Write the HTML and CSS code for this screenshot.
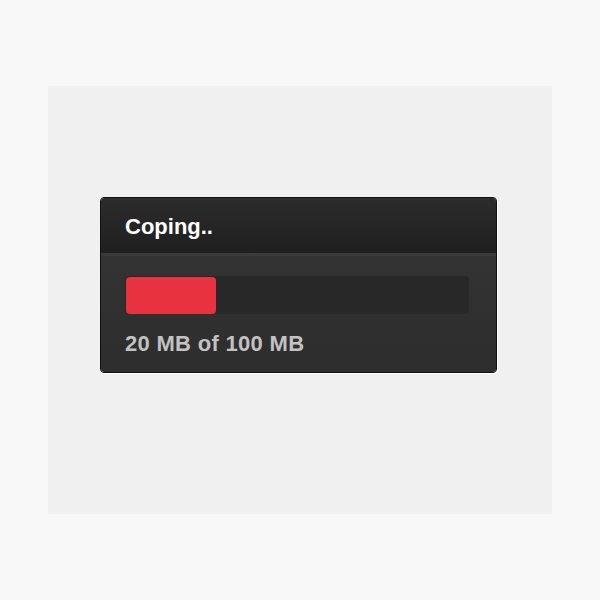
FILE: index.html
```html
<!DOCTYPE html>
<html lang="en">
<head>
    <meta charset="UTF-8">
    <title>Coping</title>
    <link rel="stylesheet" href="styles.css">
</head>
<body>
    <div class="panel">
        <div class="dialog">
            <div class="dialog-header">Coping..</div>
            <div class="dialog-body">
                <div class="progress">
                    <div class="progress-fill" style="width: 90px;"></div>
                </div>
                <div class="progress-text">20 MB of 100 MB</div>
            </div>
        </div>
    </div>
</body>
</html>
```

FILE: styles.css
```css
body {
    margin: 0;
    background: #f8f8f8;
    font-family: "Liberation Sans", Arial, sans-serif;
}

.panel {
    margin: 86px 48px;
    height: 428px;
    background: #f0f0f0;
    padding: 111px 0 0 52px;
    box-sizing: border-box;
}

.dialog {
    width: 397px;
    box-sizing: border-box;
    border: 1px solid #111111;
    border-radius: 4px;
    box-shadow: 1px 1px 0 #ffffff;
    overflow: hidden;
}

.dialog-header {
    padding: 17px 24px 14px;
    line-height: 24px;
    font-size: 22px;
    font-weight: bold;
    color: #ffffff;
    background: linear-gradient(#2c2c2c, #1f1f1f);
}

.dialog-body {
    border-top: 3px solid #3a3a3a;
    background: linear-gradient(#333333, #2d2d2d);
    padding: 20px 27px 16px 24px;
}

.progress {
    height: 38px;
    background: #282828;
    border-radius: 4px;
    padding: 1px 0 0 1px;
    box-sizing: border-box;
}

.progress-fill {
    height: 37px;
    background: #e8323f;
    border-radius: 4px;
}

.progress-text {
    margin-top: 18px;
    line-height: 24px;
    font-size: 22px;
    font-weight: bold;
    letter-spacing: 0.3px;
    color: #c2c2c2;
}
```
